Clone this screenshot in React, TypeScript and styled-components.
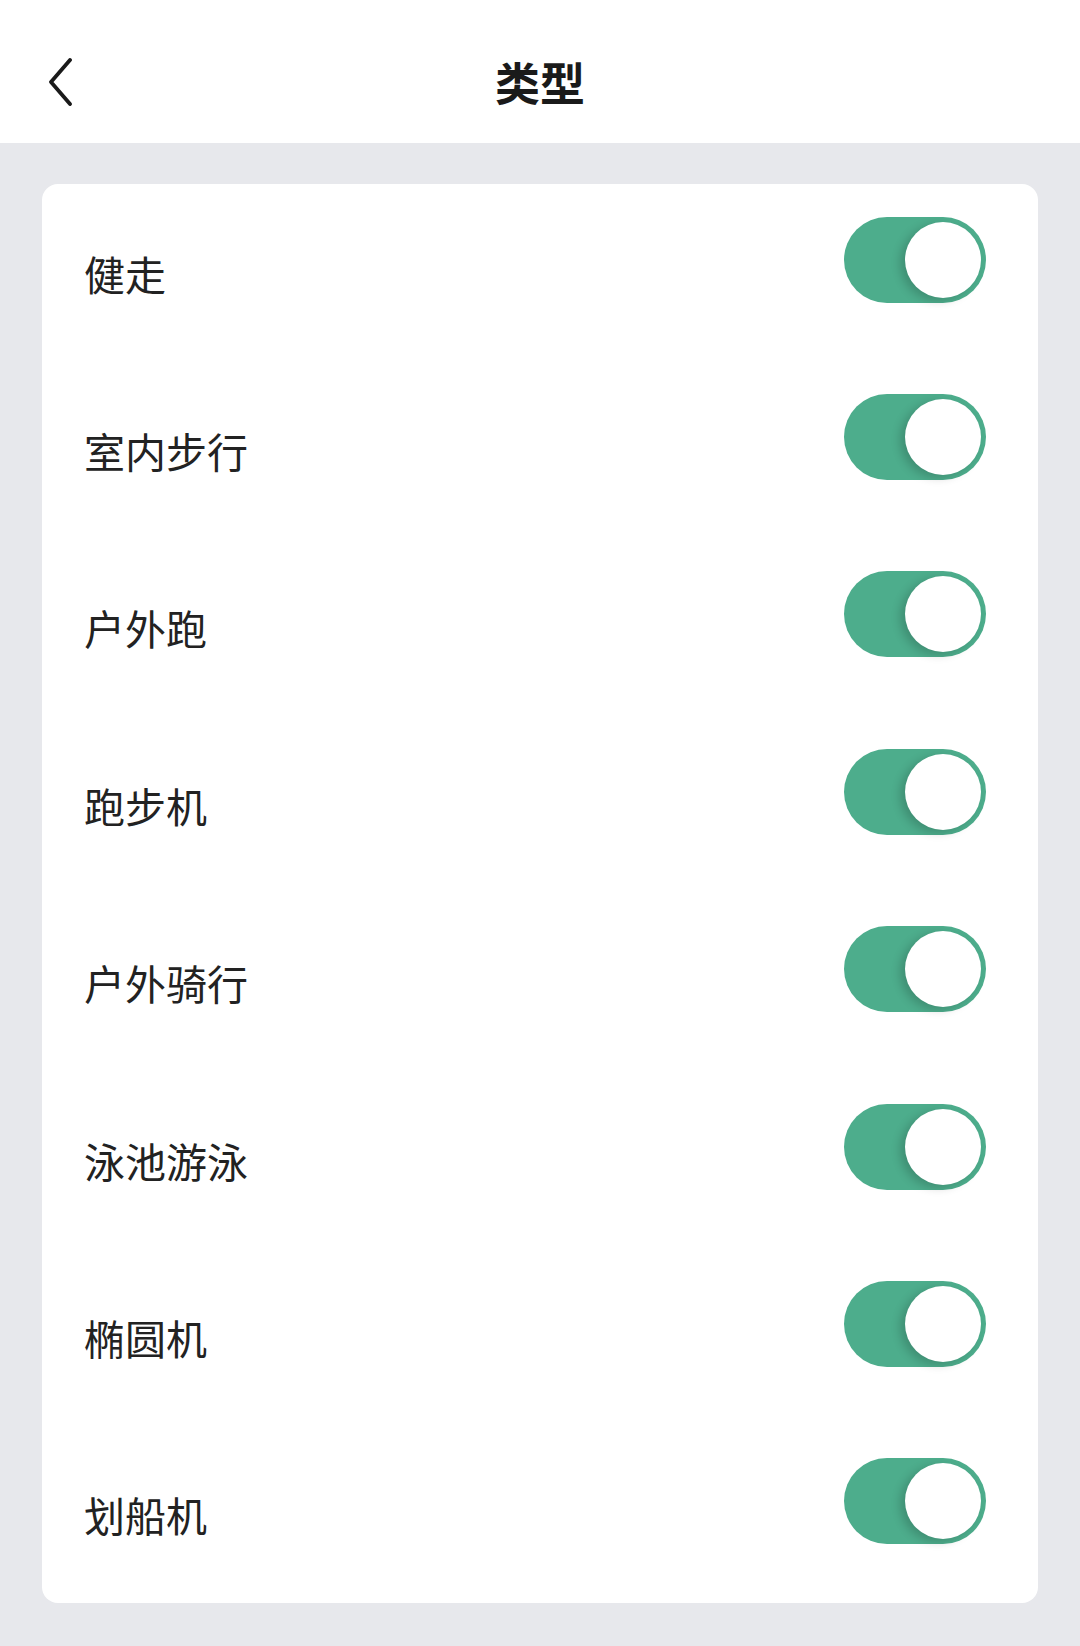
import { useState } from "react";
import styled, { createGlobalStyle } from "styled-components";

const GlobalStyle = createGlobalStyle`
  html, body {
    margin: 0;
    padding: 0;
    background: #e7e8ec;
    font-family: "Noto Sans CJK SC", "Noto Sans", sans-serif;
  }
`;

const initialTypes = [
  "健走",
  "室内步行",
  "户外跑",
  "跑步机",
  "户外骑行",
  "泳池游泳",
  "椭圆机",
  "划船机",
];

const App = () => {
  const [enabled, setEnabled] = useState<boolean[]>(initialTypes.map(() => true));

  const toggle = (index: number) => {
    setEnabled((prev) => prev.map((v, i) => (i === index ? !v : v)));
  };

  return (
    <Page>
      <GlobalStyle />
      <Header>
        <BackButton aria-label="返回">
          <svg width="28" height="48" viewBox="0 0 28 48" fill="none">
            <path
              d="M24 2 L5 24 L24 46"
              stroke="#1a1a1a"
              strokeWidth="3.8"
              strokeLinecap="round"
              strokeLinejoin="round"
            />
          </svg>
        </BackButton>
        <Title>类型</Title>
      </Header>
      <Card>
        {initialTypes.map((name, index) => (
          <Row key={name}>
            <Label>{name}</Label>
            <Switch $on={enabled[index]} onClick={() => toggle(index)}>
              <Knob $on={enabled[index]} />
            </Switch>
          </Row>
        ))}
      </Card>
    </Page>
  );
};

const Page = styled.div`
  min-height: 1646px;
  background: #e7e8ec;
`;

const Header = styled.header`
  position: relative;
  height: 143px;
  background: #ffffff;
  display: flex;
  align-items: center;
  justify-content: center;
`;

const BackButton = styled.button`
  position: absolute;
  left: 46px;
  top: 58px;
  padding: 0;
  border: none;
  background: none;
  display: flex;
`;

const Title = styled.h1`
  margin: 0;
  padding-top: 20px;
  font-size: 45px;
  font-weight: 700;
  color: #1a1a1a;
  letter-spacing: 0;
`;

const Card = styled.section`
  margin: 41px 42px 0;
  background: #ffffff;
  border-radius: 16px;
  overflow: hidden;
`;

const Row = styled.div`
  height: 177.4px;
  display: flex;
  align-items: center;
  justify-content: space-between;
  padding: 0 52px 0 42px;
`;

const Label = styled.span`
  font-size: 41px;
  color: #222222;
`;

const Switch = styled.div<{ $on: boolean }>`
  position: relative;
  width: 142px;
  height: 86px;
  margin-bottom: 26px;
  border-radius: 43px;
  background: ${(p) => (p.$on ? "#4dad8c" : "#d5d6da")};
  cursor: pointer;
`;

const Knob = styled.div<{ $on: boolean }>`
  position: absolute;
  top: 5px;
  left: ${(p) => (p.$on ? "61px" : "5px")};
  width: 76px;
  height: 76px;
  border-radius: 50%;
  background: #ffffff;
  box-shadow: -5px 3px 10px rgba(0, 0, 0, 0.18);
`;

export default App;
